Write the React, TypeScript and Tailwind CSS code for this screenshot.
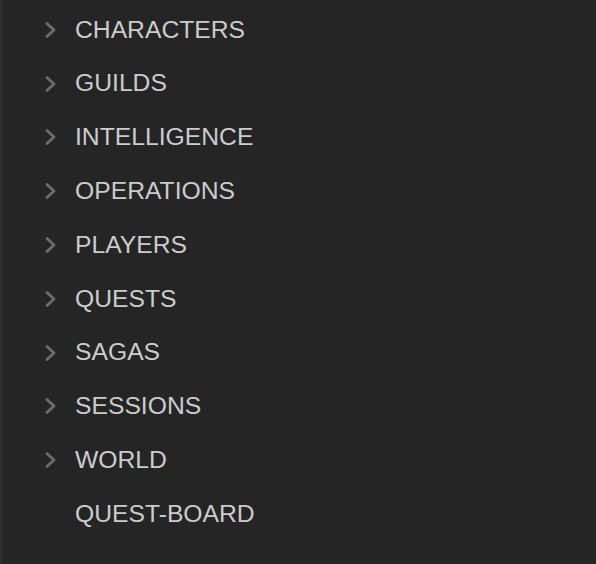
import React from "react";

const items = [
  { label: "CHARACTERS", chevron: true },
  { label: "GUILDS", chevron: true },
  { label: "INTELLIGENCE", chevron: true },
  { label: "OPERATIONS", chevron: true },
  { label: "PLAYERS", chevron: true },
  { label: "QUESTS", chevron: true },
  { label: "SAGAS", chevron: true },
  { label: "SESSIONS", chevron: true },
  { label: "WORLD", chevron: true },
  { label: "QUEST-BOARD", chevron: false },
];

function Chevron() {
  return (
    <svg width="14" height="18" viewBox="0 0 14 18" className="shrink-0">
      <path d="M3 2.5 L10 9 L3 15.5" fill="none" stroke="#6b6b6b" strokeWidth="3" strokeLinecap="round" strokeLinejoin="round" />
    </svg>
  );
}

export default function App() {
  return (
    <div className="w-[596px] h-[564px] bg-[#252526] border-l-[3px] border-[#2c2c2d] overflow-hidden pt-[3px]" style={{ fontFamily: '"Liberation Sans", Arial, sans-serif' }}>
      {items.map((it) => (
        <div key={it.label} className="h-[53.8px] flex items-center">
          <div className="w-[72px] flex justify-end pr-[17px]">
            {it.chevron ? <Chevron /> : <div className="w-[14px]" />}
          </div>
          <span className="text-[24.7px] text-[#cccccc] leading-none">{it.label}</span>
        </div>
      ))}
    </div>
  );
}
